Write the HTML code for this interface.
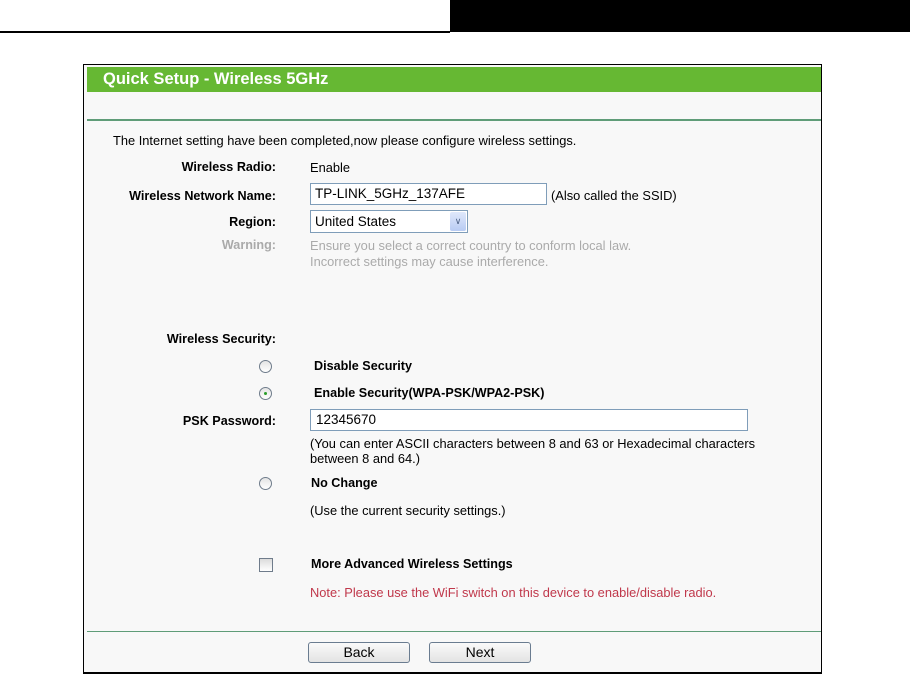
<!DOCTYPE html>
<html><head><style>
body{margin:0;width:910px;height:674px;background:#fff;position:relative;overflow:hidden;font-family:"Liberation Sans",Arial,sans-serif;font-size:12.85px;color:#000}
.a{position:absolute}
.lab{position:absolute;right:634px;font-weight:bold;white-space:nowrap;font-size:12.6px}
.v{position:absolute;left:310px;white-space:nowrap}
.gray{color:#aaa}
.radio{position:absolute;left:259px;width:11px;height:11px;border:1px solid #6f7c8b;border-radius:50%;background:linear-gradient(#e4e4e4,#fff)}
.b{font-weight:bold;font-size:12.6px}
.btn{position:absolute;top:642px;width:100px;height:19px;border:1px solid #6a7c90;border-radius:3px;background:linear-gradient(#fafafa,#e3e3e3);text-align:center;font-size:14px;line-height:19px}
</style></head><body>
<div class="a" style="left:450px;top:0;width:460px;height:32px;background:#000"></div>
<div class="a" style="left:0;top:31px;width:450px;height:2px;background:#000"></div>
<div class="a" style="left:83px;top:64px;width:737px;height:607px;border:1px solid #000;border-bottom:2px solid #000;background:#f8f8f8"></div>
<div class="a" style="left:87px;top:67px;width:734px;height:25px;background:#66b833;color:#fff;font-weight:bold;font-size:16.5px;line-height:24px;padding-left:16px;box-sizing:border-box;white-space:nowrap">Quick Setup - Wireless 5GHz</div>
<div class="a" style="left:87px;top:119px;width:734px;height:2px;background:#5f9c78"></div>
<div class="a" style="left:113px;top:133px">The Internet setting have been completed,now please configure wireless settings.</div>
<div class="lab" style="top:160px">Wireless Radio:</div><div class="v" style="top:160px">Enable</div>
<div class="lab" style="top:189px">Wireless Network Name:</div>
<div class="a" style="left:310px;top:183px;width:237px;height:22px;border:1px solid #7f9db9;background:#fff;box-sizing:border-box;padding-left:4px;line-height:20px;font-size:13.5px">TP-LINK_5GHz_137AFE</div>
<div class="a" style="left:551px;top:188px">(Also called the SSID)</div>
<div class="lab" style="top:215px">Region:</div>
<div class="a" style="left:310px;top:210px;width:158px;height:23px;border:1px solid #7f9db9;background:#fff;box-sizing:border-box;padding-left:4px;line-height:21px;font-size:13.5px">United States
<div class="a" style="right:1px;top:1px;width:16px;height:19px;background:linear-gradient(#dfe8fb,#b8cbf3);border-radius:2px;color:#4d6185;font-size:9px;text-align:center;line-height:19px">&#8744;</div></div>
<div class="lab gray" style="top:238px;color:#aaa">Warning:</div>
<div class="v gray" style="top:238px">Ensure you select a correct country to conform local law.</div>
<div class="v gray" style="top:254px">Incorrect settings may cause interference.</div>
<div class="lab" style="top:332px">Wireless Security:</div>
<div class="radio" style="top:360px"></div><div class="a b" style="left:314px;top:359px">Disable Security</div>
<div class="radio" style="top:387px"><div class="a" style="left:4px;top:4px;width:3px;height:3px;border-radius:50%;background:#2a9d2a"></div></div>
<div class="a b" style="left:314px;top:386px">Enable Security(WPA-PSK/WPA2-PSK)</div>
<div class="lab" style="top:414px">PSK Password:</div>
<div class="a" style="left:310px;top:409px;width:438px;height:22px;border:1px solid #7f9db9;background:#fff;box-sizing:border-box;padding-left:5px;line-height:20px;font-size:13.5px">12345670</div>
<div class="v" style="top:436px;line-height:15px">(You can enter ASCII characters between 8 and 63 or Hexadecimal characters<br>between 8 and 64.)</div>
<div class="radio" style="top:477px"></div><div class="a b" style="left:311px;top:476px">No Change</div>
<div class="v" style="top:503px">(Use the current security settings.)</div>
<div class="a" style="left:259px;top:558px;width:12px;height:12px;border:1px solid #6f7c8b;background:linear-gradient(#dcdcdc,#fff)"></div>
<div class="a b" style="left:311px;top:557px">More Advanced Wireless Settings</div>
<div class="v" style="top:585px;color:#c0384b">Note: Please use the WiFi switch on this device to enable/disable radio.</div>
<div class="a" style="left:87px;top:631px;width:734px;height:1px;background:#5f9c78"></div>
<div class="btn" style="left:308px">Back</div>
<div class="btn" style="left:429px">Next</div>
</body></html>
